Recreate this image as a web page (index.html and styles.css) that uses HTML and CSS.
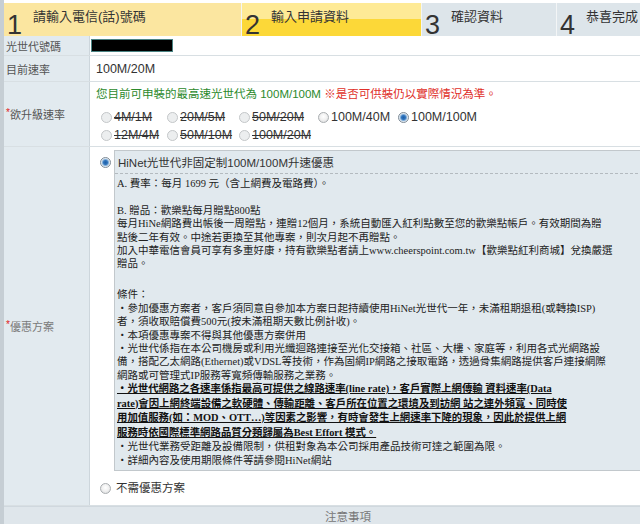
FILE: index.html
```html
<!DOCTYPE html>
<html lang="zh-Hant">
<head>
    <meta charset="UTF-8">
    <title>HiNet光世代升速申請</title>
    <link rel="stylesheet" href="styles.css">
</head>
<body>

<div class="page">

    <div class="steps">
        <div class="step step-done"><span class="step-num">1</span><span class="step-text">請輸入電信(話)號碼</span></div>
        <div class="step step-now"><span class="step-num">2</span><span class="step-text">輸入申請資料</span></div>
        <div class="step step-next"><span class="step-num">3</span><span class="step-text">確認資料</span></div>
        <div class="step step-last"><span class="step-num">4</span><span class="step-text">恭喜完成</span></div>
    </div>

    <div class="row row-id">
        <div class="label">光世代號碼</div>
        <div class="value"><span class="masked"></span></div>
    </div>

    <div class="row row-speed">
        <div class="label">目前速率</div>
        <div class="value">100M/20M</div>
    </div>

    <div class="row row-upgrade">
        <div class="label"><span class="req">*</span>欲升級速率</div>
        <div class="value value-block">
            <p class="notice">
                <span class="notice-ok">您目前可申裝的最高速光世代為 100M/100M</span>
                <span class="notice-warn">※是否可供裝仍以實際情況為準。</span>
            </p>
            <div class="options">
                <label class="opt off"><span class="radio"></span>4M/1M</label>
                <label class="opt off"><span class="radio"></span>20M/5M</label>
                <label class="opt off"><span class="radio"></span>50M/20M</label>
                <label class="opt"><span class="radio"></span>100M/40M</label>
                <label class="opt"><span class="radio checked"></span>100M/100M</label>
                <label class="opt off"><span class="radio"></span>12M/4M</label>
                <label class="opt off"><span class="radio"></span>50M/10M</label>
                <label class="opt off"><span class="radio"></span>100M/20M</label>
            </div>
        </div>
    </div>

    <div class="row row-plan">
        <div class="label label-soft"><span class="req">*</span>優惠方案</div>
        <div class="value value-block plan-value">
            <div class="plan-choice">
                <span class="radio checked"></span>
                <div class="plan-box">
                    <div class="plan-title">HiNet光世代非固定制100M/100M升速優惠</div>
                    <div class="plan-body">
                        <p>A. 費率：每月 1699 元（含上網費及電路費）。</p>
                        <p class="sec-b">
                            B. 贈品：歡樂點每月贈點800點<br>
                            每月HiNe網路費出帳後一周贈點，連贈12個月，系統自動匯入紅利點數至您的歡樂點帳戶。有效期間為贈<br>
                            點後二年有效。中途若更換至其他專案，則次月起不再贈點。<br>
                            加入中華電信會員可享有多重好康，持有歡樂點者請上www.cheerspoint.com.tw【歡樂點紅利商城】兌換嚴選<br>
                            贈品。
                        </p>
                        <p class="sec-c">
                            條件：<br>
                            ・參加優惠方案者，客戶須同意自參加本方案日起持續使用HiNet光世代一年，未滿租期退租(或轉換ISP)<br>
                            者，須收取賠償費500元(按未滿租期天數比例計收)。<br>
                            ・本項優惠專案不得與其他優惠方案併用<br>
                            ・光世代係指在本公司機房或利用光纖迴路連接至光化交接箱、社區、大樓、家庭等，利用各式光網路設<br>
                            備，搭配乙太網路(Ethernet)或VDSL等技術，作為固網IP網路之接取電路，透過骨集網路提供客戶連接網際<br>
                            網路或可管理式IP服務等寬頻傳輸服務之業務。
                        </p>
                        <p class="strong-note">
                            <u>・光世代網路之各速率係指最高可提供之線路速率(line rate)，客戶實際上網傳輸 資料速率(Data</u><br>
                            <u>rate)會因上網終端設備之軟硬體、傳輸距離、客戶所在位置之環境及到訪網 站之連外頻寬、同時使</u><br>
                            <u>用加值服務(如：MOD、OTT…)等因素之影響，有時會發生上網速率下降的現象，因此於提供上網</u><br>
                            <u>服務時依國際標準網路品質分類歸屬為Best Effort 模式。</u>
                        </p>
                        <p class="sec-end">
                            ・光世代業務受距離及設備限制，供租對象為本公司採用產品技術可達之範圍為限。<br>
                            ・詳細內容及使用期限條件等請參閱HiNet網站
                        </p>
                    </div>
                </div>
            </div>
            <label class="opt no-plan"><span class="radio"></span>不需優惠方案</label>
        </div>
    </div>

    <div class="notes">注意事項</div>

</div>

</body>
</html>
```

FILE: styles.css
```css
* {
    margin: 0;
    padding: 0;
    box-sizing: border-box;
}

body {
    font-family: "Liberation Sans", "Noto Sans CJK TC", sans-serif;
    font-size: 11.5px;
    color: #333;
    background-color: #fff;
}

.page {
    width: 640px;
    height: 524px;
    overflow: hidden;
    border-left: 4px solid #c6ced4;
    padding-top: 3px;
}

/* steps bar */

.steps {
    display: flex;
    height: 33px;
}

.step {
    display: flex;
    align-items: flex-start;
    gap: 11px;
    flex: none;
    padding-left: 3px;
    background-color: #dde5ea;
    border-right: 1px solid #f3f5f6;
}

.step-done {
    width: 238px;
    background-color: #fbe6a0;
}

.step-now {
    width: 180px;
    background: linear-gradient(#feea96 0, #feea96 50%, #fcd838 50%, #fcd838 100%);
}

.step-next {
    width: 135px;
}

.step-last {
    flex: 1;
    border-right: none;
}

.step-num {
    font-size: 27px;
    line-height: 27px;
    margin-top: 9px;
    color: #333;
}

.step-text {
    font-size: 13px;
    line-height: 15px;
    margin-top: 6px;
    color: #333;
}

/* form rows */

.row {
    display: flex;
    border-bottom: 1px solid #d8dfe3;
}

.label {
    width: 86px;
    flex: none;
    display: flex;
    align-items: center;
    padding-left: 2px;
    background-color: #e2eaef;
    border-right: 1px solid #cdd6dc;
    font-size: 11px;
    color: #555;
}

.label-soft {
    color: #7a7a7a;
}

.req {
    color: #e02020;
    font-size: 10px;
    margin-top: -3px;
}

.value {
    flex: 1;
    display: flex;
    align-items: center;
    padding-left: 6px;
    font-size: 12.5px;
}

.value-block {
    display: block;
}

.row-id {
    height: 20px;
}

.row-id .value {
    padding-left: 1px;
}

.masked {
    display: block;
    width: 82px;
    height: 13px;
    background-color: #000;
    border: 1px solid #4a8484;
}

.row-speed {
    height: 26px;
}

.row-upgrade .value {
    padding: 4px 0 2px 6px;
}

.notice {
    font-size: 11.5px;
    line-height: 16px;
    margin-bottom: 6px;
}

.notice-ok {
    color: #2c8a2c;
}

.notice-warn {
    color: #e0302a;
}

.options {
    display: grid;
    grid-template-columns: 66px 72px 79px 80px auto;
    grid-auto-rows: 18px;
    margin-left: 5px;
}

.opt {
    display: flex;
    align-items: center;
    gap: 2px;
    font-size: 12.5px;
    color: #333;
}

.opt.off {
    text-decoration: line-through;
}

.radio {
    display: inline-block;
    flex: none;
    width: 11px;
    height: 11px;
    border-radius: 50%;
    border: 1px solid #a9adb0;
    background: radial-gradient(circle at 50% 40%, #fff 0, #f0f0f0 50%, #d4d6d8 100%);
}

.opt.off .radio {
    border-color: #c4c7c9;
    background: #eceeef;
}

.radio.checked {
    border-color: #7d8a96;
    background: radial-gradient(circle, #1f5fa6 0, #2f74bd 2px, #8fb6dc 3.2px, #e6edf3 4.2px);
}

/* discount plans */

.plan-value {
    padding: 3px 0 10px 10px;
}

.plan-choice {
    display: flex;
    align-items: flex-start;
    gap: 3px;
}

.plan-choice .radio {
    margin-top: 7px;
}

.plan-box {
    flex: none;
    width: 540px;
    border: 1px solid #c2c8cc;
    background-color: #e1e9ee;
}

.plan-title {
    padding: 5px 3px 3px;
    line-height: 14px;
    font-size: 11.5px;
    border-bottom: 1px dashed #b3babf;
}

.plan-body {
    padding: 3px 2px 2px;
    font-family: "Liberation Serif", "Noto Sans CJK TC", serif;
    font-size: 10.5px;
    line-height: 13.4px;
    white-space: nowrap;
    color: #222;
}

.sec-b {
    margin-top: 13.4px;
}

.sec-c {
    margin-top: 17.5px;
}

.strong-note {
    font-weight: bold;
    font-size: 10.4px;
    line-height: 14.5px;
    color: #111;
}

.strong-note u {
    text-decoration-thickness: 1px;
}

.sec-end {
    line-height: 14px;
}

.no-plan {
    margin-top: 10px;
    line-height: 14px;
    gap: 5px;
    font-size: 11.5px;
}

.no-plan .radio {
    border-color: #a9adb0;
    background: radial-gradient(circle at 50% 40%, #fff 0, #f0f0f0 50%, #d4d6d8 100%);
}

.notes {
    height: 20px;
    padding: 3px 0 0 52px;
    line-height: 14px;
    text-align: center;
    background-color: #dfe6eb;
    border-top: 1px solid #d0d8de;
    font-size: 11.5px;
    color: #777;
}
```
